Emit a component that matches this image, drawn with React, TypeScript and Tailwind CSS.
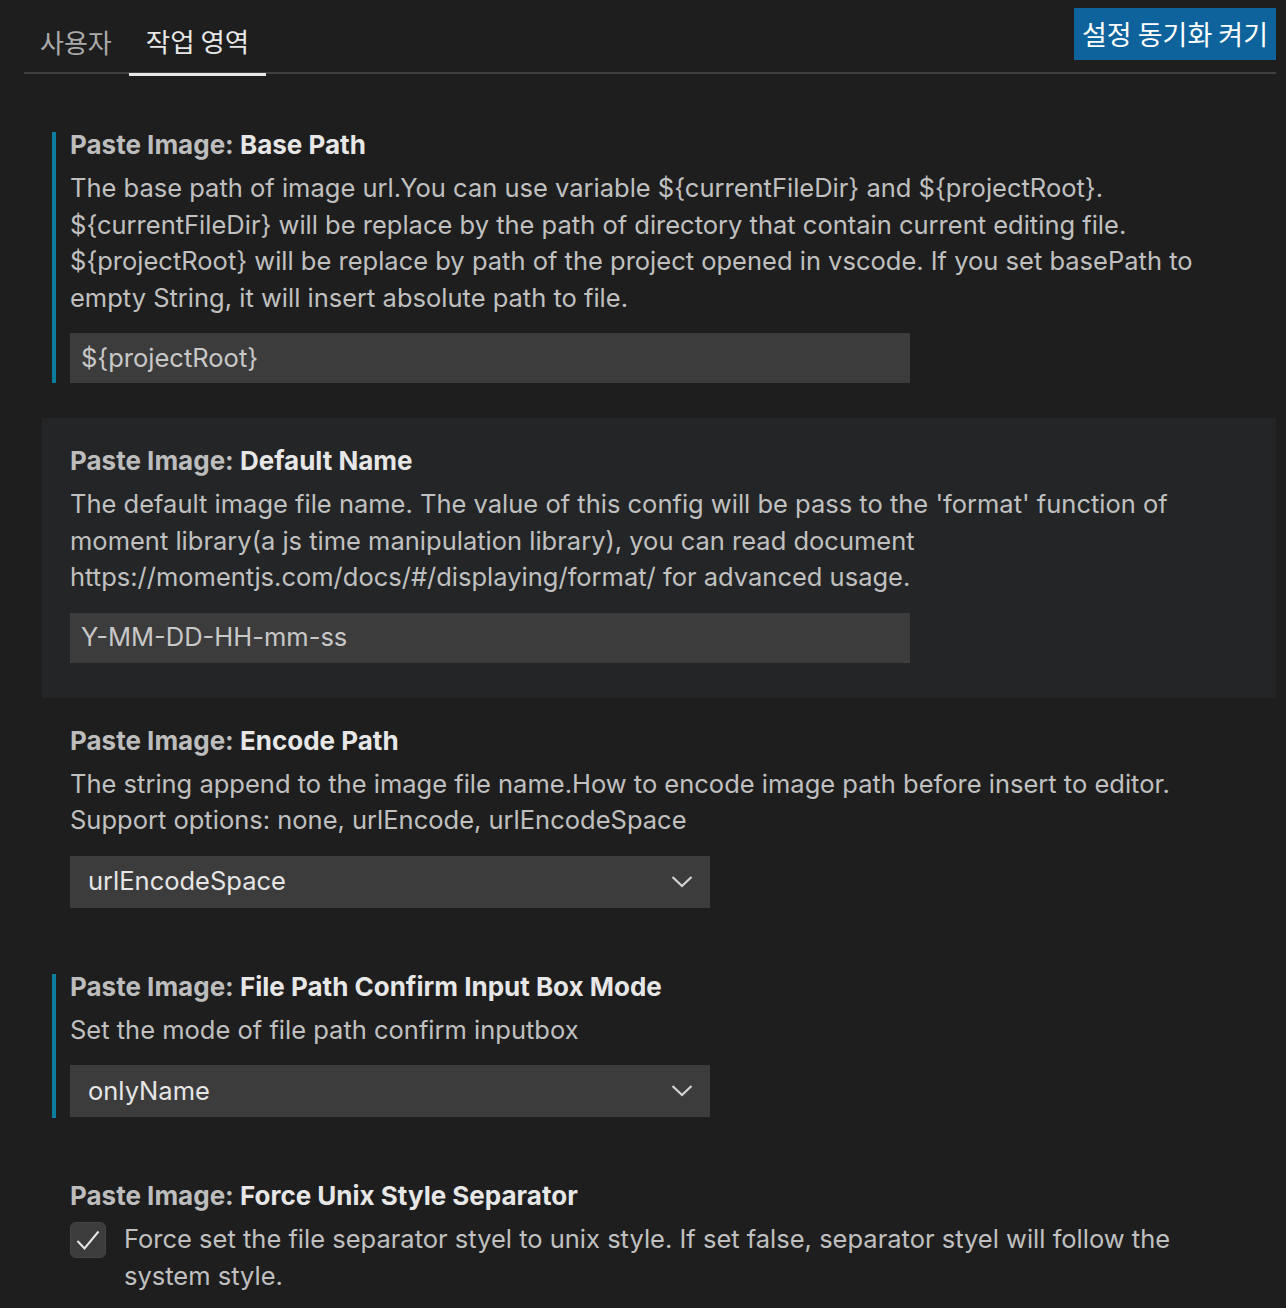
import React from "react"

const ui = { fontFamily: "Inter, 'Noto Sans CJK KR', sans-serif" }
const ko = { fontFamily: "'Noto Sans CJK KR', Inter, sans-serif" }

function Chevron() {
  return (
    <svg width="22" height="14" viewBox="0 0 22 14" className="shrink-0">
      <path d="M1.5 2 L11 11 L20.5 2" fill="none" stroke="#d4d4d4" strokeWidth="2.2" />
    </svg>
  )
}

function Title({ name }: { name: string }) {
  return (
    <div className="text-[26px] leading-[36px] font-bold whitespace-nowrap">
      <span className="text-[#bdbdbd]">Paste Image: </span>
      <span className="text-[#e7e7e7]">{name}</span>
    </div>
  )
}

function Row({
  modified,
  focused,
  pb = "pb-[35px]",
  children,
}: {
  modified?: boolean
  focused?: boolean
  pb?: string
  children: React.ReactNode
}) {
  return (
    <div className={`relative pl-[28px] pr-[20px] pt-[25px] ${pb} ${focused ? "bg-[#232526]" : ""}`}>
      {modified && <div className="absolute left-[10px] top-[30px] bottom-[35px] w-[4px] bg-[#0c7d9d]" />}
      {children}
    </div>
  )
}

function Desc({ children, mt = "mt-[7px]" }: { children: React.ReactNode; mt?: string }) {
  return <div className={`${mt} text-[25.5px] leading-[36.5px] text-[#c0c0c0]`}>{children}</div>
}

function TextBox({ value }: { value: string }) {
  return (
    <div className="mt-[17px] w-[840px] h-[50px] bg-[#3c3c3c] flex items-center px-[11px] text-[25.5px] text-[#c8c8c8]">
      {value}
    </div>
  )
}

function Select({ value }: { value: string }) {
  return (
    <div className="mt-[17px] w-[640px] h-[52px] bg-[#3c3c3c] flex items-center justify-between pl-[18px] pr-[17px] text-[25.5px] text-[#e6e6e6]">
      <span>{value}</span>
      <Chevron />
    </div>
  )
}

export default function App() {
  return (
    <div className="min-h-[1308px] w-[1286px] bg-[#1e1e1e] overflow-hidden" style={ui}>
      <div className="ml-[24px] mr-[10px] flex items-start justify-between border-b-2 border-[#404040] h-[74px]">
        <div className="flex items-stretch h-[74px] pl-[16px]">
          <div className="pr-[17px] flex items-center pt-[8px] text-[26px] text-[#aaaaaa]" style={ko}>
            사용자
          </div>
          <div className="flex flex-col justify-between pt-[8px]" style={ko}>
            <div className="flex-1 flex items-center px-[17px] text-[26.5px] text-[#e7e7e7]">작업 영역</div>
            <div className="h-[3px] bg-[#e7e7e7] -mb-[2px]" />
          </div>
        </div>
        <div className="mt-[8px] h-[52px] bg-[#0e639c] flex items-center px-[8px] text-[27px] text-white" style={ko}>
          설정 동기화 켜기
        </div>
      </div>

      <div className="ml-[42px] mr-[10px] mt-[28px]">
        <Row modified>
          <Title name="Base Path" />
          <Desc>
            The base path of image url.You can use variable ${"{currentFileDir}"} and ${"{projectRoot}"}.
            <br />
            ${"{currentFileDir}"} will be replace by the path of directory that contain current editing file.
            <br />
            ${"{projectRoot}"} will be replace by path of the project opened in vscode. If you set basePath to
            <br />
            empty String, it will insert absolute path to file.
          </Desc>
          <TextBox value={"${projectRoot}"} />
        </Row>

        <Row focused>
          <Title name="Default Name" />
          <Desc>
            The default image file name. The value of this config will be pass to the 'format' function of
            <br />
            moment library(a js time manipulation library), you can read document
            <br />
            https://momentjs.com/docs/#/displaying/format/ for advanced usage.
          </Desc>
          <TextBox value="Y-MM-DD-HH-mm-ss" />
        </Row>

        <Row pb="pb-[36px]">
          <Title name="Encode Path" />
          <Desc>
            The string append to the image file name.How to encode image path before insert to editor.
            <br />
            Support options: none, urlEncode, urlEncodeSpace
          </Desc>
          <Select value="urlEncodeSpace" />
        </Row>

        <Row modified pb="pb-[36px]">
          <Title name="File Path Confirm Input Box Mode" />
          <Desc>Set the mode of file path confirm inputbox</Desc>
          <Select value="onlyName" />
        </Row>

        <Row>
          <Title name="Force Unix Style Separator" />
          <div className="flex items-start gap-[18px] mt-[7px]">
            <div className="w-[36px] h-[36px] shrink-0 rounded-[6px] bg-[#3c3c3c] border border-[#454545] flex items-center justify-center mt-[1px]">
              <svg width="26" height="22" viewBox="0 0 26 22">
                <path d="M2.5 12 L9.5 19.5 L23.5 2.5" fill="none" stroke="#e6e6e6" strokeWidth="2" />
              </svg>
            </div>
            <Desc mt="mt-0">
              Force set the file separator styel to unix style. If set false, separator styel will follow the
              <br />
              system style.
            </Desc>
          </div>
        </Row>
      </div>
    </div>
  )
}
